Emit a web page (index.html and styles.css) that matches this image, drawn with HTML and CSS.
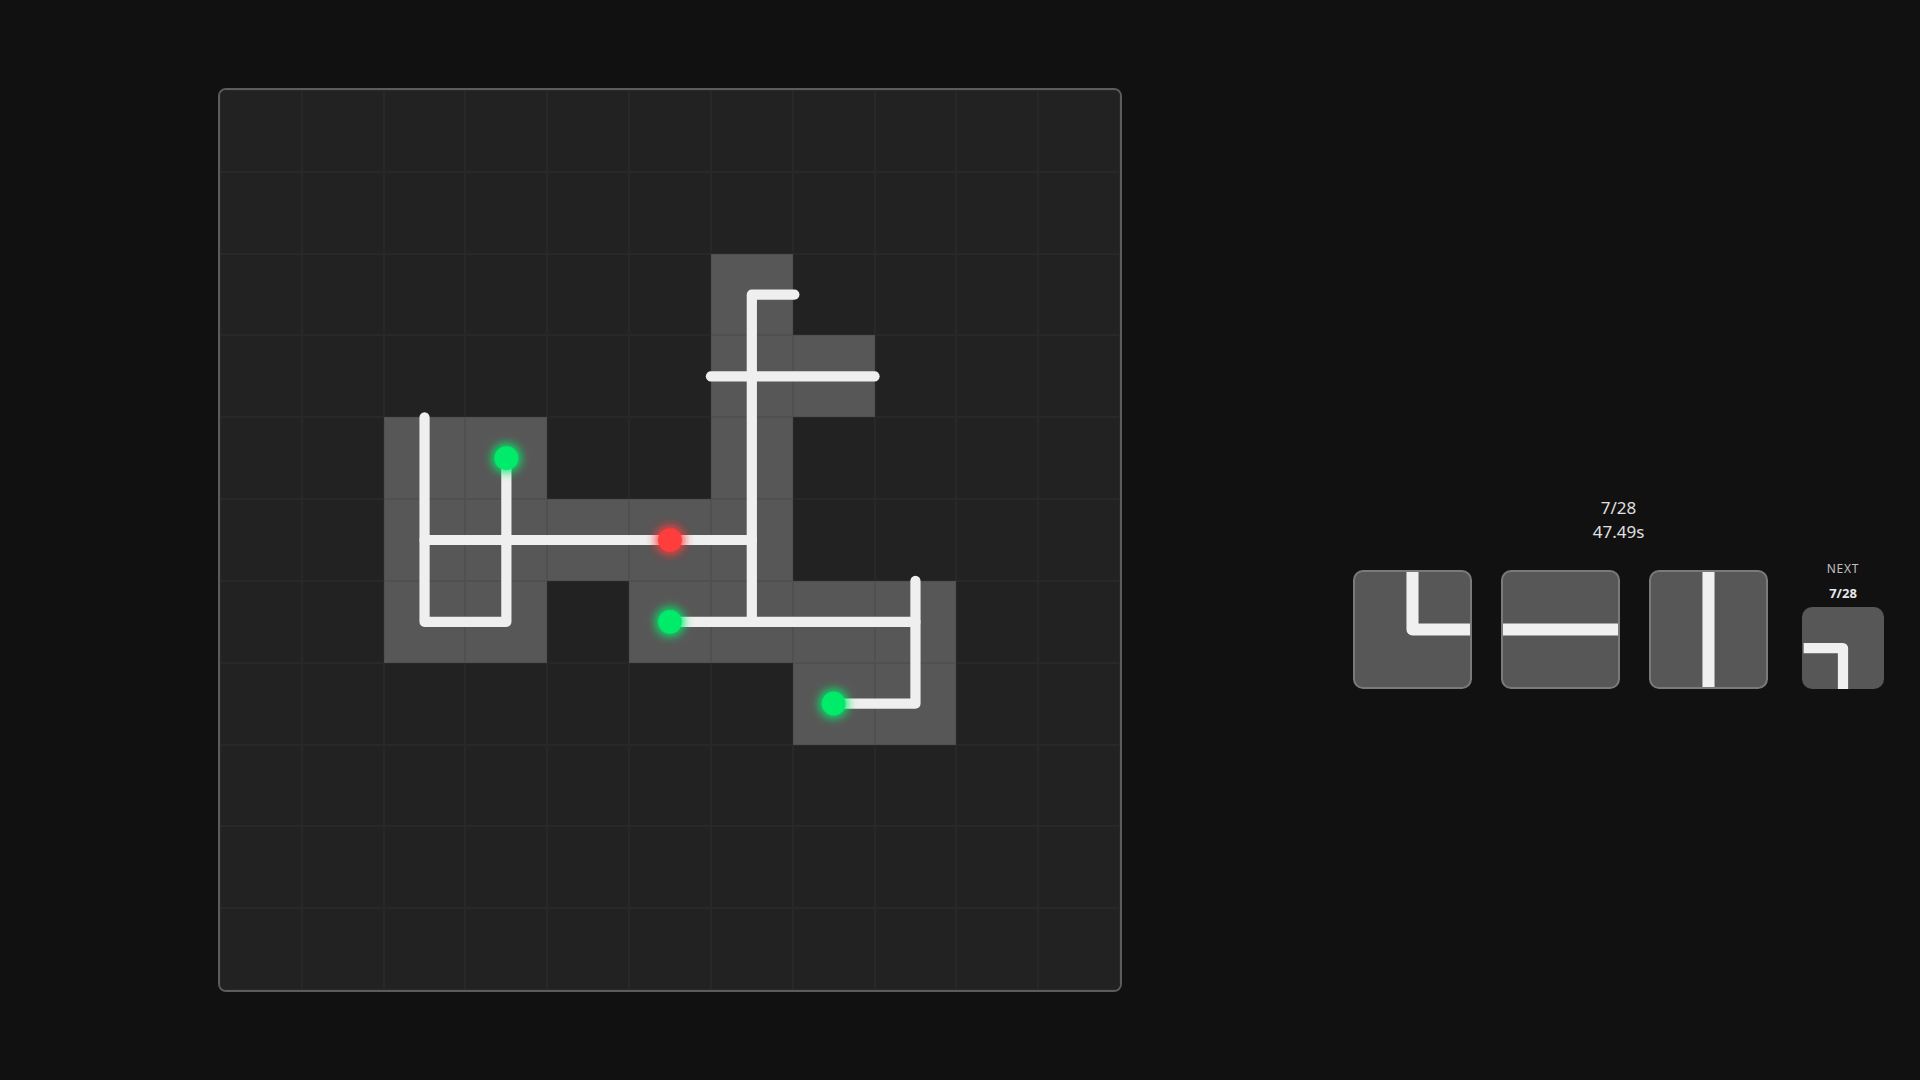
FILE: index.html
```html
<!DOCTYPE html>
<html lang="en">
<head>
<meta charset="utf-8">
<title>Pipes</title>
<link rel="stylesheet" href="styles.css">
</head>
<body>
<main class="stage">
  <section class="board">
    <div class="grid">
      <div class="c"></div><div class="c"></div><div class="c"></div><div class="c"></div><div class="c"></div><div class="c"></div><div class="c"></div><div class="c"></div><div class="c"></div><div class="c"></div><div class="c"></div>
      <div class="c"></div><div class="c"></div><div class="c"></div><div class="c"></div><div class="c"></div><div class="c"></div><div class="c"></div><div class="c"></div><div class="c"></div><div class="c"></div><div class="c"></div>
      <div class="c"></div><div class="c"></div><div class="c"></div><div class="c"></div><div class="c"></div><div class="c"></div><div class="c on"></div><div class="c"></div><div class="c"></div><div class="c"></div><div class="c"></div>
      <div class="c"></div><div class="c"></div><div class="c"></div><div class="c"></div><div class="c"></div><div class="c"></div><div class="c on"></div><div class="c on"></div><div class="c"></div><div class="c"></div><div class="c"></div>
      <div class="c"></div><div class="c"></div><div class="c on"></div><div class="c on"></div><div class="c"></div><div class="c"></div><div class="c on"></div><div class="c"></div><div class="c"></div><div class="c"></div><div class="c"></div>
      <div class="c"></div><div class="c"></div><div class="c on"></div><div class="c on"></div><div class="c on"></div><div class="c on"></div><div class="c on"></div><div class="c"></div><div class="c"></div><div class="c"></div><div class="c"></div>
      <div class="c"></div><div class="c"></div><div class="c on"></div><div class="c on"></div><div class="c"></div><div class="c on"></div><div class="c on"></div><div class="c on"></div><div class="c on"></div><div class="c"></div><div class="c"></div>
      <div class="c"></div><div class="c"></div><div class="c"></div><div class="c"></div><div class="c"></div><div class="c"></div><div class="c"></div><div class="c on"></div><div class="c on"></div><div class="c"></div><div class="c"></div>
      <div class="c"></div><div class="c"></div><div class="c"></div><div class="c"></div><div class="c"></div><div class="c"></div><div class="c"></div><div class="c"></div><div class="c"></div><div class="c"></div><div class="c"></div>
      <div class="c"></div><div class="c"></div><div class="c"></div><div class="c"></div><div class="c"></div><div class="c"></div><div class="c"></div><div class="c"></div><div class="c"></div><div class="c"></div><div class="c"></div>
      <div class="c"></div><div class="c"></div><div class="c"></div><div class="c"></div><div class="c"></div><div class="c"></div><div class="c"></div><div class="c"></div><div class="c"></div><div class="c"></div><div class="c"></div>
    </div>
    <svg class="pipes" viewBox="0 0 11 11" aria-hidden="true">
      <defs>
        <filter id="glow" x="-2" y="-2" width="5" height="5">
          <feGaussianBlur stdDeviation="0.07" result="b"/>
          <feMerge><feMergeNode in="b"/><feMergeNode in="b"/><feMergeNode in="SourceGraphic"/></feMerge>
        </filter>
      </defs>
      <g class="pipe">
        <path d="M2.5 4 V6.5 H3.5 V4.5"/>
        <path d="M2.5 5.5 H6.5"/>
        <path d="M7.02 2.5 H6.5 V6.5"/>
        <path d="M6 3.5 H8"/>
        <path d="M5.5 6.5 H8.5"/>
        <path d="M8.5 6 V7.5 H7.5"/>
      </g>
      <g filter="url(#glow)">
        <circle class="src" cx="3.5" cy="4.5" r="0.145"/>
        <circle class="src" cx="5.5" cy="6.5" r="0.145"/>
        <circle class="src" cx="7.5" cy="7.5" r="0.145"/>
        <circle class="sink" cx="5.5" cy="5.5" r="0.145"/>
      </g>
    </svg>
  </section>

  <aside class="panel">
    <div class="stats">
      <div>7/28</div>
      <div>47.49s</div>
    </div>
    <div class="tray">
      <div class="tile">
        <svg viewBox="0 0 100 100"><path d="M50 -2 V50 H102"/></svg>
      </div>
      <div class="tile">
        <svg viewBox="0 0 100 100"><path d="M-2 50 H102"/></svg>
      </div>
      <div class="tile">
        <svg viewBox="0 0 100 100"><path d="M50 -2 V102"/></svg>
      </div>
      <div class="next">
        <div class="next-label">NEXT</div>
        <div class="next-count">7/28</div>
        <div class="next-tile">
          <svg viewBox="0 0 100 100"><path d="M2 50 H50 V102"/></svg>
        </div>
      </div>
    </div>
  </aside>
</main>
</body>
</html>
```

FILE: styles.css
```css
html, body {
  margin: 0;
  padding: 0;
  background: #111111;
  width: 1920px;
  height: 1080px;
  overflow: hidden;
  font-family: "Noto Sans", "Open Sans", sans-serif;
}

.stage {
  display: flex;
  align-items: flex-start;
  padding: 88px 0 0 218px;
  gap: 231px;
}

.board {
  position: relative;
  width: 900px;
  height: 900px;
  border: 2px solid #5c5c5c;
  border-radius: 8px;
  background: #222222;
  overflow: hidden;
  flex: none;
}

.grid {
  display: grid;
  grid-template-columns: repeat(11, 1fr);
  grid-template-rows: repeat(11, 1fr);
  width: 100%;
  height: 100%;
}

.c {
  background: #222222;
  box-shadow: inset 0 0 0 1px rgba(255, 255, 255, 0.028);
}

.c.on {
  background: #575757;
  box-shadow: inset 0 0 0 1px rgba(0, 0, 0, 0.07);
}

.pipes {
  position: absolute;
  left: 0;
  top: 0;
  width: 900px;
  height: 900px;
}

.pipe path {
  fill: none;
  stroke: #efefef;
  stroke-width: 0.125;
  stroke-linecap: round;
  stroke-linejoin: round;
}

.src { fill: #00eb6a; }
.sink { fill: #ff3c3c; }

.panel {
  margin-top: 408px;
  display: flex;
  flex-direction: column;
  align-items: center;
}

.stats {
  color: #e0e0e0;
  font-size: 17px;
  line-height: 24px;
  text-align: center;
  margin-bottom: 17px;
}

.tray {
  display: flex;
  align-items: flex-end;
  gap: 29px;
}

.tile {
  width: 119px;
  height: 119px;
  box-sizing: border-box;
  border: 2px solid #7a7a7a;
  border-radius: 10px;
  background: #575757;
  overflow: hidden;
}

.tile svg, .next-tile svg {
  display: block;
  width: 100%;
  height: 100%;
}

.tile path {
  fill: none;
  stroke: #f0f0f0;
  stroke-width: 10.5;
  stroke-linejoin: round;
  stroke-linecap: butt;
}

.next {
  margin-left: 5px;
  display: flex;
  flex-direction: column;
  align-items: center;
}

.next-label {
  color: #c0c0c0;
  font-size: 12px;
  line-height: 16px;
  letter-spacing: 0.8px;
  margin-bottom: 8px;
}

.next-count {
  color: #e8e8e8;
  font-size: 13px;
  font-weight: 700;
  line-height: 16px;
  margin-bottom: 6px;
}

.next-tile {
  width: 82px;
  height: 82px;
  border-radius: 10px;
  background: #575757;
  overflow: hidden;
}

.next-tile path {
  fill: none;
  stroke: #f0f0f0;
  stroke-width: 12.5;
  stroke-linejoin: round;
  stroke-linecap: butt;
}
```
